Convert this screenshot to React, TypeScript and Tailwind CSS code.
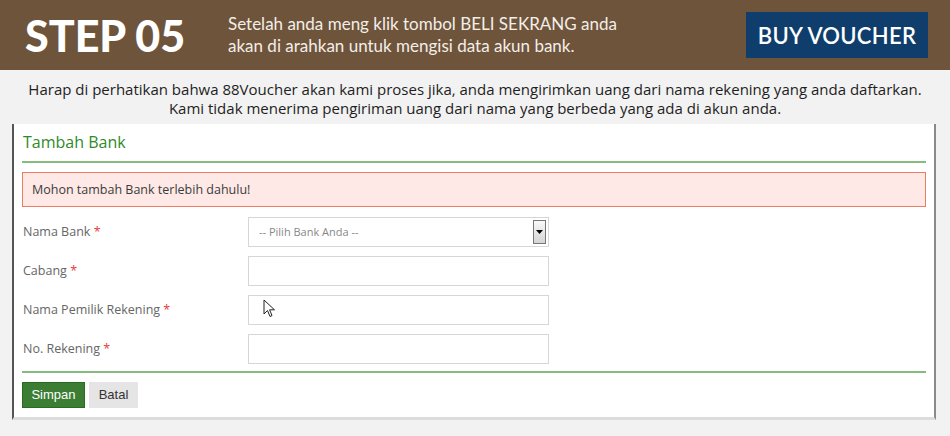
const fields = [
  { label: 'Nama Bank', kind: 'select' },
  { label: 'Cabang', kind: 'input' },
  { label: 'Nama Pemilik Rekening', kind: 'input' },
  { label: 'No. Rekening', kind: 'input' },
] as const;

function Cursor() {
  return (
    <svg className="pointer-events-none absolute left-[14px] top-[3px]" width="13" height="19" viewBox="0 0 13 19">
      <path d="M1 1 L1 15 L4.5 11.5 L7 17.5 L9 16.6 L6.6 10.8 L11.5 10.8 Z" fill="#fff" stroke="#222" strokeWidth="1" strokeLinejoin="round" />
    </svg>
  );
}

export default function App() {
  return (
    <div className="flex h-[436px] w-[950px] flex-col overflow-hidden bg-[#f2f2f2]">
      {/* Step header */}
      <div className="flex h-[70px] shrink-0 items-center bg-[#6e543b]">
        <h1 className="w-[228px] pl-[25px] font-['Lato',sans-serif] text-[43px] font-black leading-none text-white">
          STEP 05
        </h1>
        <p className="w-[518px] font-['Lato',sans-serif] text-[17px] leading-[22px] text-[#f3eee8]">
          Setelah anda meng klik tombol BELI SEKRANG anda
          <br />
          akan di arahkan untuk mengisi data akun bank.
        </p>
        <button
          type="button"
          className="flex h-[46px] w-[182px] items-center justify-center bg-[#0f3e6c] font-['Lato',sans-serif] text-[22px] font-semibold tracking-[0.3px] text-white"
        >
          BUY VOUCHER
        </button>
      </div>

      {/* Notice */}
      <div className="pt-[10px] text-center font-['Open_Sans',sans-serif] text-[15px] leading-[19px] text-[#1e1e1e]">
        Harap di perhatikan bahwa 88Voucher akan kami proses jika, anda mengirimkan uang dari nama rekening yang anda daftarkan.
        <br />
        Kami tidak menerima pengiriman uang dari nama yang berbeda yang ada di akun anda.
      </div>

      {/* Form panel */}
      <div className="ml-[12px] mt-[6px] w-[924px] border-b-[3px] border-l-2 border-r-2 border-b-[#dcdcdc] border-l-[#555] border-r-[#8a8a8a] bg-white px-[8px] pb-[9px] font-['Open_Sans',sans-serif] text-[12.5px]">
        <h2 className="border-b-2 border-[#86bb80] pb-[9px] pl-[1px] pt-[8px] text-[16px] leading-[20px] text-[#2f8a2a]">
          Tambah Bank
        </h2>

        <div className="mt-[9px] border border-[#ea7d62] bg-[#fee9e6] px-[9px] py-[8px] leading-[17px] text-[#3c3c3c]">
          Mohon tambah Bank terlebih dahulu!
        </div>

        <div className="mt-[10px] flex flex-col gap-[9px]">
          {fields.map((f, i) => (
            <div key={f.label} className="flex items-center">
              <label className="w-[226px] pl-[1px] text-[#666]">
                {f.label} <span className="text-[#e53b3b]">*</span>
              </label>
              <div className="relative flex h-[30px] w-[301px] items-center border border-[#d6d6d6] bg-white">
                {f.kind === 'select' && (
                  <>
                    <span className="flex-1 pl-[10px] text-[11px] text-[#888]">-- Pilih Bank Anda --</span>
                    <span className="mr-[2px] flex h-[24px] w-[13px] items-center justify-center border border-[#777] bg-gradient-to-b from-[#fafafa] to-[#d4d4d4]">
                      <svg width="7" height="4" viewBox="0 0 7 4">
                        <path d="M0 0 H7 L3.5 4 Z" fill="#000" />
                      </svg>
                    </span>
                  </>
                )}
                {i === 2 && <Cursor />}
              </div>
            </div>
          ))}
        </div>

        <div className="mt-[7px] border-t-2 border-[#86bb80] pt-[9px]">
          <div className="flex gap-[4px] font-['Liberation_Sans',sans-serif] text-[13px]">
            <button type="button" className="h-[26px] w-[63px] border border-[#2b6a24] bg-[#3a7d33] text-white">
              Simpan
            </button>
            <button type="button" className="h-[26px] w-[49px] bg-[#e5e5e5] text-[#333]">
              Batal
            </button>
          </div>
        </div>
      </div>
    </div>
  );
}
